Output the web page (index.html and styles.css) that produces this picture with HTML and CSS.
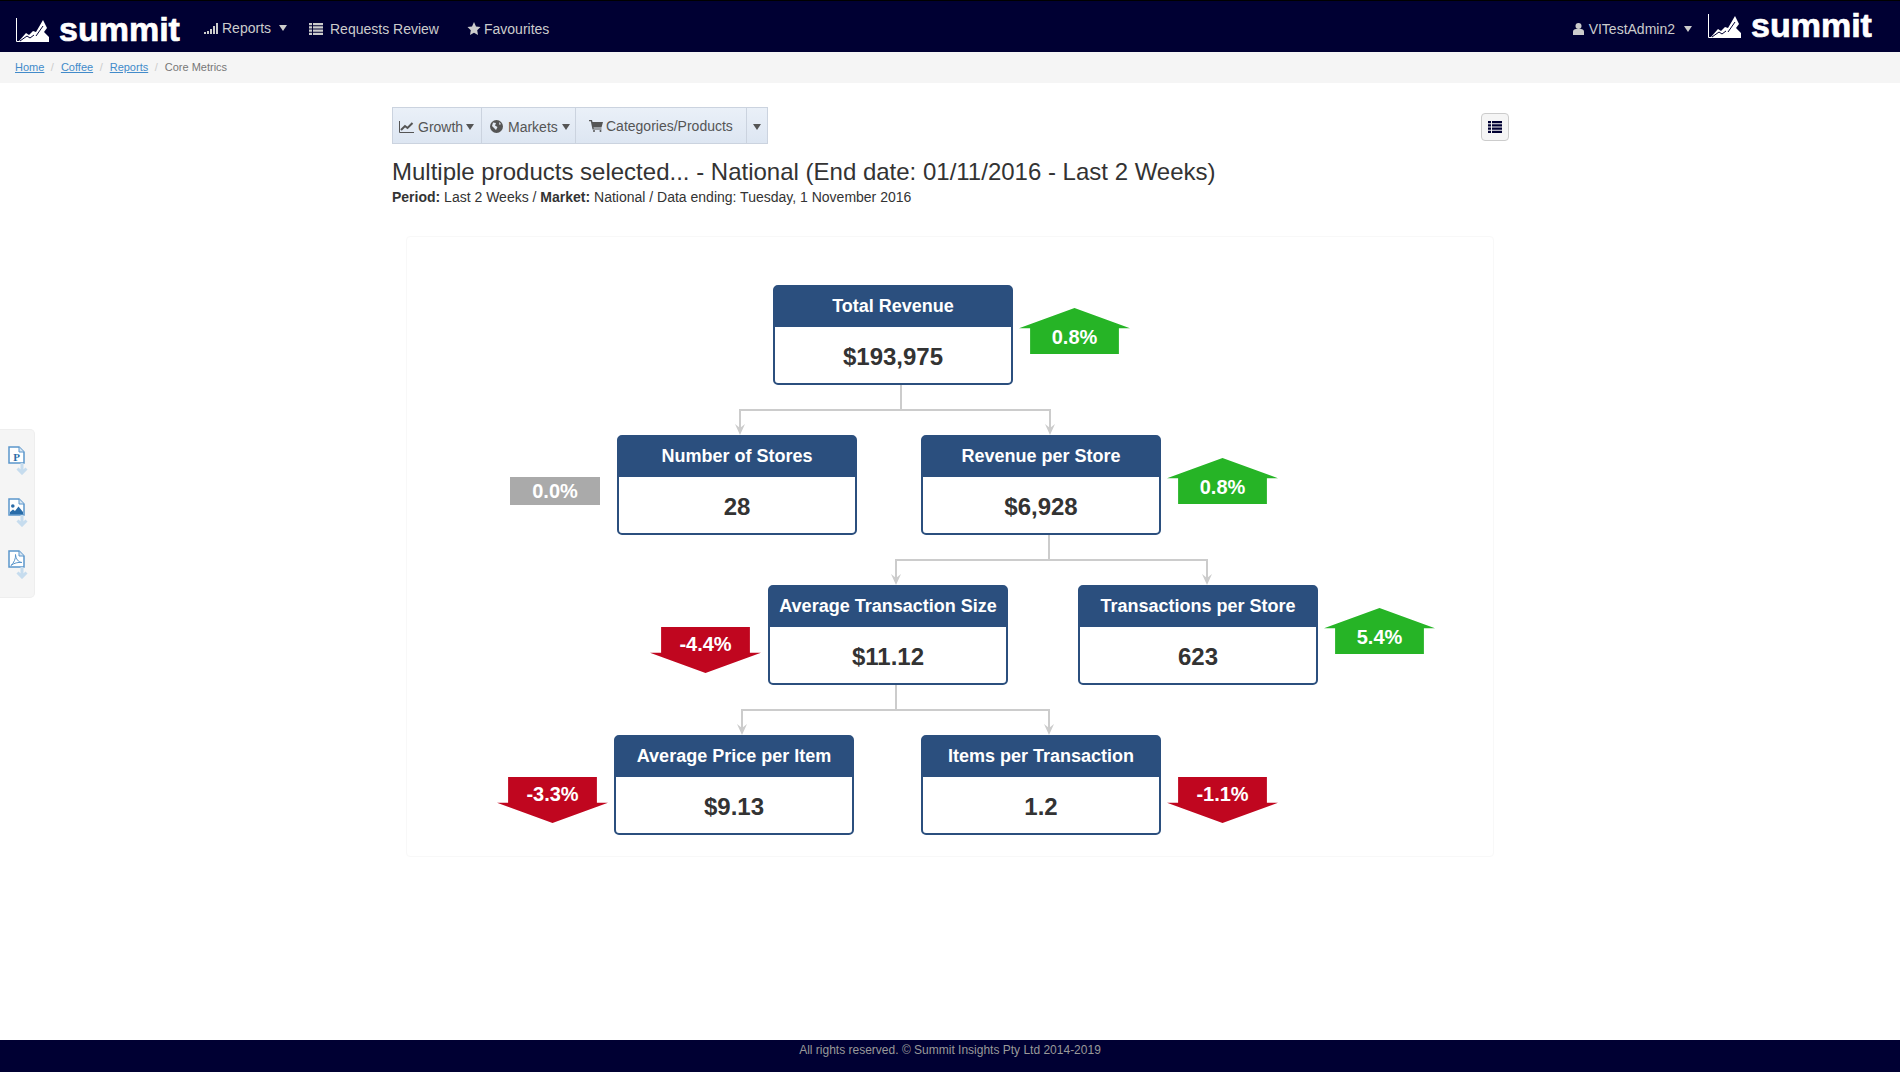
FILE: index.html
```html
<!DOCTYPE html>
<html>
    <head>
        <title>Core Metrics</title>
        <link rel="stylesheet" href="styles.css">
    </head>
    <body>
        <div class="navbar">
            <div class="brand">
                <svg class="logo-mark" viewBox="0 0 33 24"><path d="M0.500 0V23.500H33" fill="none" stroke="#fff" stroke-width="1"/><path d="M3 23L10 15L13 17L17 13L20 14L27 2L31 10L28 14L33 19V24H3Z" fill="#fff"/><path d="M4 23L11 18L14 20L18 17M20 18L27 8" fill="none" stroke="#003" stroke-width="1"/></svg>
                <span class="logo-text">summit</span>
            </div>
            <a class="nav-item nav-reports">
                <svg class="ico" width="14" height="12" viewBox="0 0 14 12"><path d="M0 10h2v2H0zM3 9h2v3H3zM6 7h2v5H6zM9 4h2v8H9zM12 1h2v11h-2z" fill="#ccc"/></svg>
                Reports <span class="caret"></span>
            </a>
            <a class="nav-item nav-requests">
                <svg class="ico" width="14" height="12" viewBox="0 0 14 12"><path d="M0 0h3v2.200H0zM4 0h10v2.200H4zM0 3.300h3v2.200H0zM4 3.300h10v2.200H4zM0 6.600h3v2.200H0zM4 6.600h10v2.200H4zM0 9.800h3V12H0zM4 9.800h10V12H4z" fill="#ccc"/></svg>
                Requests Review
            </a>
            <a class="nav-item nav-fav">
                <svg class="ico" width="14" height="13" viewBox="0 0 13 13"><path d="M6.500 0L8.500 4.400L13 5L9.700 8.200L10.500 13L6.500 10.700L2.500 13L3.300 8.200L0 5L4.500 4.400Z" fill="#ccc"/></svg>
                Favourites
            </a>
            <div class="nav-right">
                <a class="nav-item nav-user">
                    <svg class="ico" width="11" height="12" viewBox="0 0 11 12"><circle cx="5.500" cy="3" r="3" fill="#ccc"/><path d="M0 12V8.500C0 7 1.500 6 3 6H8C9.500 6 11 7 11 8.500V12Z" fill="#ccc"/></svg>
                    VITestAdmin2 <span class="caret"></span>
                </a>
                <div class="brand brand-right">
                    <svg class="logo-mark" viewBox="0 0 33 24"><path d="M0.500 0V23.500H33" fill="none" stroke="#fff" stroke-width="1"/><path d="M3 23L10 15L13 17L17 13L20 14L27 2L31 10L28 14L33 19V24H3Z" fill="#fff"/><path d="M4 23L11 18L14 20L18 17M20 18L27 8" fill="none" stroke="#003" stroke-width="1"/></svg>
                    <span class="logo-text">summit</span>
                </div>
            </div>
        </div>

        <div class="breadcrumb">
            <a href="#">Home</a><span class="sep">/</span>
            <a href="#">Coffee</a><span class="sep">/</span>
            <a href="#">Reports</a><span class="sep">/</span>
            <span class="crumb-current">Core Metrics</span>
        </div>

        <div class="side-tools">
            <div class="side-tool">
                <svg width="21" height="29" viewBox="0 0 21 29"><path d="M1 1H11L16 6V17H1Z" fill="#fff" stroke="#5b96cb" stroke-width="1.500"/><path d="M11 1V6H16" fill="#d8e6f3" stroke="#5b96cb"/><text x="8.500" y="14.500" class="side-p">P</text><path d="M14 17V27M9.500 22.500L14 27L18.500 22.500" fill="none" stroke="#c6dcee" stroke-width="3"/></svg>
            </div>
            <div class="side-tool">
                <svg width="21" height="29" viewBox="0 0 21 29"><path d="M1 1H11L16 6V17H1Z" fill="#fff" stroke="#5b96cb" stroke-width="1.500"/><path d="M11 1V6H16" fill="#d8e6f3" stroke="#5b96cb"/><circle cx="4.800" cy="8" r="1.800" fill="#2a6ca8"/><path d="M2 16.500V14L5 11.500L7 13L10.500 8.500L15 14V16.500Z" fill="#2a6ca8"/><path d="M14 17V27M9.500 22.500L14 27L18.500 22.500" fill="none" stroke="#c6dcee" stroke-width="3"/></svg>
            </div>
            <div class="side-tool">
                <svg width="21" height="29" viewBox="0 0 21 29"><path d="M1 1H11L16 6V17H1Z" fill="#fff" stroke="#5b96cb" stroke-width="1.500"/><path d="M11 1V6H16" fill="#d8e6f3" stroke="#5b96cb"/><path d="M3 15.500C6 13 8 8 7.500 4.500C8 9 10 12 14 12.500C10 12 6 13 3 15.500Z" fill="none" stroke="#5b96cb"/><path d="M14 17V27M9.500 22.500L14 27L18.500 22.500" fill="none" stroke="#c6dcee" stroke-width="3"/></svg>
            </div>
        </div>

        <div class="content">
            <div class="toolbar-row">
                <div class="btn-group">
                    <div class="tb-btn tb-growth">
                        <svg class="tb-ico" width="15" height="12" viewBox="0 0 15 12"><path d="M0.500 0V11.500H15" fill="none" stroke="#555" stroke-width="1"/><path d="M2 9L6 5L8.500 7L13.500 2" fill="none" stroke="#555" stroke-width="2"/></svg>
                        Growth <span class="tb-caret"></span>
                    </div>
                    <div class="tb-btn tb-markets">
                        <svg class="tb-ico" width="13" height="13" viewBox="0 0 13 13"><circle cx="6.500" cy="6.500" r="6.500" fill="#555"/><path d="M3 2.500L6 3L5 5.500L7.500 7L6 10L4 8L2 6Z M9 2L11 4L9.500 5Z" fill="#e3eaf4"/></svg>
                        Markets <span class="tb-caret"></span>
                    </div>
                    <div class="tb-btn tb-cats">
                        <svg class="tb-ico" width="14" height="12" viewBox="0 0 14 12"><path d="M0 0H3L3.500 2H14L12.500 7.500H4.500L4.800 8.500H12.500V9.500H3.500L1.800 1.300H0Z" fill="#555"/><circle cx="5" cy="11" r="1" fill="#555"/><circle cx="11.500" cy="11" r="1" fill="#555"/></svg>
                        Categories/Products
                    </div>
                    <div class="tb-btn tb-more"><span class="tb-caret"></span></div>
                </div>
                <div class="list-btn">
                    <svg width="14" height="12" viewBox="0 0 14 12"><path d="M0 0h3v2.200H0zM4 0h10v2.200H4zM0 3.300h3v2.200H0zM4 3.300h10v2.200H4zM0 6.600h3v2.200H0zM4 6.600h10v2.200H4zM0 9.800h3V12H0zM4 9.800h10V12H4z" fill="#003"/></svg>
                </div>
            </div>
            <h1 class="report-title">Multiple products selected... - National (End date: 01/11/2016 - Last 2 Weeks)</h1>
            <p class="report-sub"><b>Period:</b> Last 2 Weeks / <b>Market:</b> National / Data ending: Tuesday, 1 November 2016</p>

            <div class="diagram">
                <svg class="links" width="1088" height="621" viewBox="406 236 1088 621">
                    <g fill="none" stroke="#ccc" stroke-width="2">
                        <path d="M901 385V410M740 432V410H1050V432"/>
                        <path d="M1049 535V560M896 582V560H1207V582"/>
                        <path d="M896 685V710M742 732V710H1049V732"/>
                    </g>
                    <g fill="#ccc">
                        <path d="M735 424L740 428L745 424L740 435Z"/>
                        <path d="M1045 424L1050 428L1055 424L1050 435Z"/>
                        <path d="M891 574L896 578L901 574L896 585Z"/>
                        <path d="M1202 574L1207 578L1212 574L1207 585Z"/>
                        <path d="M737 724L742 728L747 724L742 735Z"/>
                        <path d="M1044 724L1049 728L1054 724L1049 735Z"/>
                    </g>
                </svg>

                <div class="node n-total"><div class="node-head">Total Revenue</div><div class="node-val">$193,975</div></div>
                <div class="node n-stores"><div class="node-head">Number of Stores</div><div class="node-val">28</div></div>
                <div class="node n-revstore"><div class="node-head">Revenue per Store</div><div class="node-val">$6,928</div></div>
                <div class="node n-avgtx"><div class="node-head">Average Transaction Size</div><div class="node-val">$11.12</div></div>
                <div class="node n-txstore"><div class="node-head">Transactions per Store</div><div class="node-val">623</div></div>
                <div class="node n-avgprice"><div class="node-head">Average Price per Item</div><div class="node-val">$9.13</div></div>
                <div class="node n-items"><div class="node-head">Items per Transaction</div><div class="node-val">1.2</div></div>

                <div class="delta up d-total">0.8%</div>
                <div class="delta flat d-stores">0.0%</div>
                <div class="delta up d-revstore">0.8%</div>
                <div class="delta down d-avgtx">-4.4%</div>
                <div class="delta up d-txstore">5.4%</div>
                <div class="delta down d-avgprice">-3.3%</div>
                <div class="delta down d-items">-1.1%</div>
            </div>
        </div>

        <div class="footer">All rights reserved. © Summit Insights Pty Ltd 2014-2019</div>
    </body>
</html>
```
FILE: styles.css
```css
html, body {
    margin: 0;
    height: 100%;
}
body {
    font-family: "Liberation Sans", Arial, sans-serif;
    font-size: 14px;
    color: #333;
    background: #fff;
    display: flex;
    flex-direction: column;
    position: relative;
}
.navbar {
    height: 51px;
    border-top: 1px solid #000;
    background: #003;
    display: flex;
    align-items: center;
    color: #ccc;
    padding-left: 16px;
    flex: none;
}
.brand {
    display: flex;
    align-items: flex-start;
    width: 188px;
    height: 24px;
    margin-top: 17px;
    align-self: flex-start;
}
.logo-mark {
    width: 33px;
    height: 24px;
    flex: none;
}
.logo-text {
    font-size: 34px;
    line-height: 22px;
    font-weight: bold;
    color: #fff;
    margin-left: 10px;
    -webkit-text-stroke: 0.7px #fff;
}
.nav-item {
    font-size: 14px;
    color: #ccc;
    display: flex;
    align-items: center;
    gap: 5px;
    margin-top: 4px;
}
.nav-reports {
    margin-top: 2px;
    gap: 4px;
    width: 105px;
}
.nav-requests {
    gap: 7px;
    width: 158px;
}
.nav-fav {
    gap: 3px;
}
.caret {
    width: 0;
    height: 0;
    border-left: 4.500px solid transparent;
    border-right: 4.500px solid transparent;
    border-top: 6px solid #ccc;
    margin-left: 4px;
}
.nav-right {
    margin-left: auto;
    display: flex;
    align-items: center;
    align-self: stretch;
}
.nav-user {
    margin-right: 16px;
}
.brand-right {
    width: 192px;
    margin-top: 13px;
}
.breadcrumb {
    height: 29px;
    padding-bottom: 2px;
    background: #f5f5f5;
    padding-left: 15px;
    display: flex;
    align-items: center;
    font-size: 11px;
    flex: none;
}
.breadcrumb a {
    color: #428bca;
}
.sep {
    color: #ccc;
    padding: 0 7px 0 6.500px;
}
.crumb-current {
    color: #777;
}
.side-tools {
    position: absolute;
    left: 0;
    top: 429px;
    width: 34px;
    height: 167px;
    background: #f5f5f5;
    border: 1px solid #eee;
    border-left: none;
    border-radius: 0 5px 5px 0;
    display: flex;
    flex-direction: column;
}
.side-tool {
    height: 35px;
    padding: 16px 0 0 8px;
    margin-bottom: 1px;
}
.side-p {
    font-family: "Liberation Serif", serif;
    font-size: 11px;
    font-weight: bold;
    fill: #2a6ca8;
    text-anchor: middle;
}
.content {
    flex: 1;
    width: 1122px;
    margin-left: 392px;
}
.toolbar-row {
    display: flex;
    justify-content: space-between;
    align-items: flex-start;
    padding-top: 24px;
}
.btn-group {
    display: flex;
    height: 35px;
    border: 1px solid #cbd3df;
    background: linear-gradient(#eaf0f8, #dde6f2);
    color: #555;
}
.tb-btn {
    display: flex;
    align-items: center;
    gap: 4px;
    border-right: 1px solid #cbd3df;
    box-sizing: border-box;
    padding-left: 6px;
    padding-top: 2px;
}
.tb-growth { width: 89px; }
.tb-markets { width: 94px; padding-left: 8px; gap: 5px; }
.tb-cats { width: 171px; padding-left: 13px; gap: 3px; padding-top: 1px; }
.tb-more { width: 20px; border-right: none; padding-left: 7px; }
.tb-caret {
    width: 0;
    height: 0;
    border-left: 4px solid transparent;
    border-right: 4px solid transparent;
    border-top: 6px solid #555;
    margin-left: -1px;
}
.list-btn {
    width: 26px;
    height: 26px;
    margin-top: 6px;
    margin-right: 5px;
    border: 1px solid #ccc;
    border-radius: 4px;
    background: #f5f5f5;
    display: flex;
    align-items: center;
    justify-content: center;
}
.report-title {
    font-size: 24px;
    font-weight: normal;
    line-height: 26px;
    margin: 15px 0 0;
}
.report-sub {
    margin: 2px 0 0;
    line-height: 20px;
}
.diagram {
    position: absolute;
    left: 406px;
    top: 236px;
    width: 1088px;
    height: 621px;
    box-sizing: border-box;
    border: 1px solid #f8f8f8;
    border-radius: 4px;
}
.links {
    position: absolute;
    left: -1px;
    top: -1px;
}
.node {
    position: absolute;
    width: 240px;
    height: 100px;
    box-sizing: border-box;
    border: 2px solid #2b4f7e;
    border-radius: 5px;
    background: #fff;
    text-align: center;
}
.node-head {
    height: 40px;
    background: #2b4f7e;
    color: #fff;
    font-size: 18px;
    font-weight: bold;
    line-height: 38px;
}
.node-val {
    font-size: 24px;
    font-weight: bold;
    line-height: 60px;
}
.n-total { left: 366px; top: 48px; }
.n-stores { left: 210px; top: 198px; }
.n-revstore { left: 514px; top: 198px; }
.n-avgtx { left: 361px; top: 348px; }
.n-txstore { left: 671px; top: 348px; }
.n-avgprice { left: 207px; top: 498px; }
.n-items { left: 514px; top: 498px; }

.delta {
    position: absolute;
    width: 111px;
    height: 46px;
    color: #fff;
    font-size: 20px;
    font-weight: bold;
    text-align: center;
    box-sizing: border-box;
}
.up {
    background: #26b426;
    clip-path: polygon(50% 0, 100% 44%, 90% 44%, 90% 100%, 10% 100%, 10% 44%, 0 44%);
    padding-top: 16px;
    line-height: 26px;
}
.down {
    background: #c0061f;
    clip-path: polygon(10% 0, 90% 0, 90% 56%, 100% 56%, 50% 100%, 0 56%, 10% 56%);
    line-height: 34px;
}
.flat {
    width: 90px;
    height: 28px;
    background: #aaa;
    line-height: 28px;
}
.d-total { left: 612px; top: 71px; }
.d-stores { left: 103px; top: 240px; }
.d-revstore { left: 760px; top: 221px; }
.d-avgtx { left: 243px; top: 390px; }
.d-txstore { left: 917px; top: 371px; }
.d-avgprice { left: 90px; top: 540px; }
.d-items { left: 760px; top: 540px; }

.footer {
    height: 32px;
    background: #003;
    color: #999;
    font-size: 12px;
    line-height: 20px;
    text-align: center;
    flex: none;
}
```
